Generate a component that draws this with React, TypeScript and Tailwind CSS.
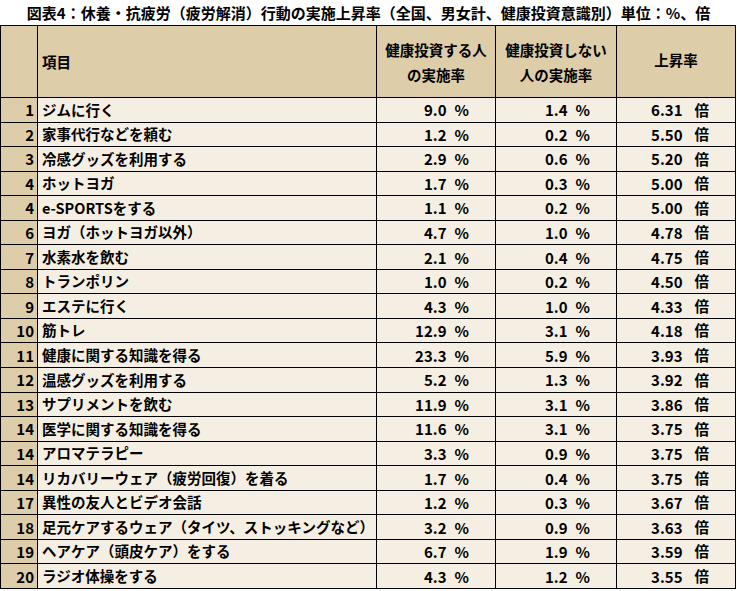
import React from "react";

type Row = { no: number; item: string; a: string; b: string; rate: string };

const rows: Row[] = [
  { no: 1, item: "ジムに行く", a: "9.0", b: "1.4", rate: "6.31" },
  { no: 2, item: "家事代行などを頼む", a: "1.2", b: "0.2", rate: "5.50" },
  { no: 3, item: "冷感グッズを利用する", a: "2.9", b: "0.6", rate: "5.20" },
  { no: 4, item: "ホットヨガ", a: "1.7", b: "0.3", rate: "5.00" },
  { no: 4, item: "e-SPORTSをする", a: "1.1", b: "0.2", rate: "5.00" },
  { no: 6, item: "ヨガ（ホットヨガ以外）", a: "4.7", b: "1.0", rate: "4.78" },
  { no: 7, item: "水素水を飲む", a: "2.1", b: "0.4", rate: "4.75" },
  { no: 8, item: "トランポリン", a: "1.0", b: "0.2", rate: "4.50" },
  { no: 9, item: "エステに行く", a: "4.3", b: "1.0", rate: "4.33" },
  { no: 10, item: "筋トレ", a: "12.9", b: "3.1", rate: "4.18" },
  { no: 11, item: "健康に関する知識を得る", a: "23.3", b: "5.9", rate: "3.93" },
  { no: 12, item: "温感グッズを利用する", a: "5.2", b: "1.3", rate: "3.92" },
  { no: 13, item: "サプリメントを飲む", a: "11.9", b: "3.1", rate: "3.86" },
  { no: 14, item: "医学に関する知識を得る", a: "11.6", b: "3.1", rate: "3.75" },
  { no: 14, item: "アロマテラピー", a: "3.3", b: "0.9", rate: "3.75" },
  { no: 14, item: "リカバリーウェア（疲労回復）を着る", a: "1.7", b: "0.4", rate: "3.75" },
  { no: 17, item: "異性の友人とビデオ会話", a: "1.2", b: "0.3", rate: "3.67" },
  { no: 18, item: "足元ケアするウェア（タイツ、ストッキングなど）", a: "3.2", b: "0.9", rate: "3.63" },
  { no: 19, item: "ヘアケア（頭皮ケア）をする", a: "6.7", b: "1.9", rate: "3.59" },
  { no: 20, item: "ラジオ体操をする", a: "4.3", b: "1.2", rate: "3.55" },
];

export default function App() {
  return (
    <div className="w-[737px] h-[591px] bg-white text-black font-['Noto_Sans_CJK_JP',sans-serif] font-bold">
      {/* title */}
      <div className="h-[25px] flex items-center justify-center text-[15px] leading-none">
        図表4：休養・抗疲労（疲労解消）行動の実施上昇率（全国、男女計、健康投資意識別）単位：%、倍
      </div>

      {/* table: gap-px on black bg draws the grid lines */}
      <div className="w-[736px] h-[564px] border border-black bg-black grid gap-px grid-cols-[36px_338px_118px_120px_118px] grid-rows-[71px_repeat(20,minmax(0,1fr))] text-[14.5px] leading-none">
        <div className="bg-[#ddcda8]" />
        <div className="bg-[#ddcda8] flex items-center pl-[4px] pt-[2px]">項目</div>
        <div className="bg-[#ddcda8] flex flex-col items-center justify-center leading-[25px]">
          <span>健康投資する人</span>
          <span>の実施率</span>
        </div>
        <div className="bg-[#ddcda8] flex flex-col items-center justify-center leading-[25px]">
          <span>健康投資しない</span>
          <span>人の実施率</span>
        </div>
        <div className="bg-[#ddcda8] flex items-center justify-center pb-[2px]">上昇率</div>

        {rows.map((r, i) => (
          <React.Fragment key={i}>
            <div className="bg-[#ddcda8] flex items-center justify-end pr-[3px] text-[15px]">{r.no}</div>
            <div className="bg-[#f5efe3] flex items-center pl-[4px] whitespace-nowrap overflow-hidden">{r.item}</div>
            <div className="bg-[#f5efe3] flex items-center justify-end pr-[26px] text-[15px]">
              <span>{r.a}</span>
              <span className="ml-[8px]">%</span>
            </div>
            <div className="bg-[#f5efe3] flex items-center justify-end pr-[26px] text-[15px]">
              <span>{r.b}</span>
              <span className="ml-[8px]">%</span>
            </div>
            <div className="bg-[#f5efe3] flex items-center justify-end pr-[26px] text-[15px]">
              <span>{r.rate}</span>
              <span className="ml-[12px] text-[14.5px]">倍</span>
            </div>
          </React.Fragment>
        ))}
      </div>
    </div>
  );
}
